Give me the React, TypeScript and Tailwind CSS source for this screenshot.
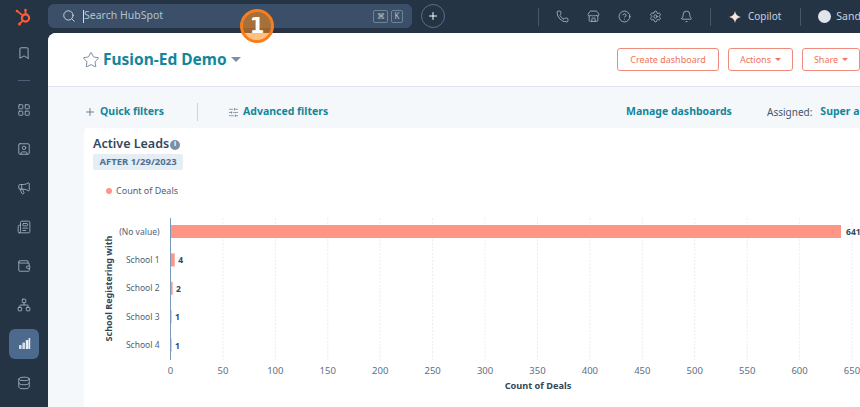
import {
  Bell,
  Bookmark,
  CircleHelp,
  Database,
  LayoutGrid,
  Megaphone,
  Network,
  Newspaper,
  Phone,
  Plus,
  Search,
  Settings,
  SlidersHorizontal,
  SquareUser,
  Star,
  Store,
  Wallet,
} from "lucide-react";

const font = { fontFamily: '"Noto Sans", sans-serif' };

const navIcons = [LayoutGrid, SquareUser, Megaphone, Newspaper, Wallet, Network];
const ticks = [0, 50, 100, 150, 200, 250, 300, 350, 400, 450, 500, 550, 600, 650];
const rows = [
  { label: "(No value)", value: 641 },
  { label: "School 1", value: 4 },
  { label: "School 2", value: 2 },
  { label: "School 3", value: 1 },
  { label: "School 4", value: 1 },
];

const xFor = (v: number) => 170.5 + v * 1.0485;

const HubLogo = () => (
  <svg width="20" height="20" viewBox="0 0 20 20" fill="none" stroke="#ff5c35">
    <circle cx="11.5" cy="11" r="3.6" strokeWidth="2.2" />
    <path d="M11.5 7.4V3.5M9 8.6 3.5 4.4M8.8 13.6 6 16.4" strokeWidth="1.8" strokeLinecap="round" />
    <circle cx="3" cy="4" r="1.3" fill="#ff5c35" stroke="none" />
    <circle cx="11.5" cy="3" r="1.3" fill="#ff5c35" stroke="none" />
    <circle cx="5.5" cy="17" r="1.5" fill="#ff5c35" stroke="none" />
  </svg>
);

const Sparkle = () => (
  <svg width="12" height="12" viewBox="0 0 12 12" fill="#f5e6e0">
    <path d="M6 0c.5 3.4 2.2 5.3 6 6-3.8.7-5.5 2.6-6 6-.5-3.4-2.2-5.3-6-6 3.8-.7 5.500-2.600 6-6Z" />
  </svg>
);

const ReportsIcon = () => (
  <svg width="13" height="13" viewBox="0 0 13 13" fill="#d5dfe9">
    <rect x="1" y="8" width="2.6" height="4" rx="0.6" />
    <rect x="4.400" y="5.500" width="2.6" height="6.500" rx="0.6" />
    <rect x="7.800" y="3" width="2.6" height="9" rx="0.6" fill="#e8eef4" />
    <rect x="10.600" y="1" width="1.600" height="11" rx="0.5" fill="#e8eef4" />
  </svg>
);

const Caret = ({ className }: { className: string }) => (
  <span className={`inline-block flex-none border-x-transparent ${className}`} />
);

const Sidebar = () => (
  <aside className="w-[48px] flex-none flex flex-col items-center text-[#a9b9c9]">
    <div className="h-[33px] flex items-center justify-center">
      <HubLogo />
    </div>
    <div className="h-[39px] flex items-center justify-center">
      <Bookmark size={14} strokeWidth={1.5} />
    </div>
    <div className="w-[12px] h-px bg-[#4d6178] mt-[8px] mb-[9px]" />
    {navIcons.map((Icon, i) => (
      <div key={i} className="h-[39px] flex items-center justify-center">
        <Icon size={14} strokeWidth={1.4} />
      </div>
    ))}
    <div className="h-[39px] flex items-center justify-center">
      <div className="w-[30px] h-[30px] rounded-md bg-[#4c6a8c] flex items-center justify-center">
        <ReportsIcon />
      </div>
    </div>
    <div className="h-[39px] flex items-center justify-center">
      <Database size={14} strokeWidth={1.4} />
    </div>
  </aside>
);

const TopBar = () => (
  <header className="relative h-[33px] flex-none flex items-center text-[#cfd9e3] whitespace-nowrap">
    <div className="w-[364px] flex-none h-[24px] -mt-px rounded-md bg-[#3b5068] flex items-center pl-[14px] pr-[9px]">
      <Search size={14} strokeWidth={1.6} className="flex-none" />
      <span className="w-px h-[13px] bg-[#d5dfe9] ml-[7px]" />
      <span className="text-[10.5px] text-[#b3c1cf]">Search HubSpot</span>
      <div className="ml-auto flex gap-[3px] text-[8px] text-[#b3c1cf]">
        <span className="w-[15px] h-[13px] border border-[#6f8398] rounded-[2px] flex items-center justify-center">⌘</span>
        <span className="w-[12px] h-[13px] border border-[#6f8398] rounded-[2px] flex items-center justify-center">K</span>
      </div>
    </div>
    <div className="ml-[9px] -mt-px flex-none w-[24px] h-[24px] rounded-full border border-[#5a6e84] flex items-center justify-center text-white">
      <Plus size={12} strokeWidth={2} />
    </div>
    <div className="ml-[93px] flex-none w-px h-[18px] bg-[#43576d]" />
    <div className="ml-[17px] flex-none flex items-center gap-[18px] text-[#b9c6d3]">
      <Phone size={13} strokeWidth={1.4} />
      <Store size={13} strokeWidth={1.4} />
      <CircleHelp size={13} strokeWidth={1.4} />
      <Settings size={13} strokeWidth={1.4} />
      <Bell size={13} strokeWidth={1.4} />
    </div>
    <div className="ml-[17px] flex-none w-px h-[18px] bg-[#43576d]" />
    <div className="ml-[18px] flex-none flex"><Sparkle /></div>
    <span className="ml-[7px] text-[10px] text-[#c6d2de]">Copilot</span>
    <div className="ml-[19px] flex-none w-px h-[18px] bg-[#43576d]" />
    <div className="ml-[17px] flex-none w-[13px] h-[13px] rounded-full bg-[#dfe5ea]" />
    <span className="ml-[5px] text-[10.5px] text-[#c6d2de]">Sandy</span>

    <div
      className="absolute left-[192px] top-[9px] w-[34px] h-[34px] rounded-full border-[3px] border-[#f97c1e] bg-[#ff8a14]/55 flex items-center justify-center text-white text-[21px] font-bold leading-none z-10"
      style={{ fontFamily: '"DejaVu Sans", sans-serif' }}
    >
      1
    </div>
  </header>
);

const PageHeader = () => (
  <div className="h-[54px] flex-none bg-white border-b border-[#dfe3eb] flex items-center pl-[34px] whitespace-nowrap">
    <Star size={18} strokeWidth={1.2} className="flex-none text-[#6a7f95]" />
    <h1 className="ml-[3px] text-[15.5px] font-bold text-[#13869b] leading-none">Fusion-Ed Demo</h1>
    <Caret className="ml-[4px] border-x-[5px] border-t-[5px] border-t-[#7c8fa3]" />
    <div className="ml-auto flex gap-[9px] text-[9px] text-[#f0735d]">
      <button className="w-[102px] h-[23px] rounded-[3px] border border-[#ef8a7c]">Create dashboard</button>
      <button className="w-[65px] h-[23px] rounded-[3px] border border-[#ef8a7c] flex items-center justify-center gap-[4px]">
        Actions <Caret className="border-x-[3px] border-t-[3px] border-t-[#f0735d]" />
      </button>
      <button className="w-[58px] h-[23px] rounded-[3px] border border-[#ef8a7c] flex items-center justify-center gap-[4px]">
        Share <Caret className="border-x-[3px] border-t-[3px] border-t-[#f0735d]" />
      </button>
    </div>
  </div>
);

const FilterRow = () => (
  <div className="h-[41px] flex-none flex items-center whitespace-nowrap text-[10.5px] font-bold text-[#13869b] pl-[36px] pt-[9px]">
    <Plus size={12} strokeWidth={2} className="flex-none text-[#6a7f95]" />
    <span className="ml-[4px] flex-none w-[64px]">Quick filters</span>
    <div className="ml-[33px] flex-none w-px h-[18px] bg-[#cbd6e2]" />
    <SlidersHorizontal size={11} strokeWidth={1.6} className="ml-[30px] flex-none text-[#6a7f95]" />
    <span className="ml-[4px] flex-none w-[86px]">Advanced filters</span>
    <span className="ml-[297px] flex-none w-[108px]">Manage dashboards</span>
    <span className="ml-[33px] flex-none text-[10px] font-normal text-[#42566b]">Assigned:</span>
    <span className="ml-[8px] flex-none">Super admin</span>
  </div>
);

const Chart = () => (
  <svg viewBox="84 206 776 201" className="block w-[776px] h-[201px] flex-none" style={font}>
    {ticks.map((t) => (
      <g key={t}>
        {t > 0 && (
          <line x1={xFor(t)} x2={xFor(t)} y1="218" y2="360" stroke="#e3e8ee" strokeWidth="0.8" strokeDasharray="2 1.500" />
        )}
        <text x={xFor(t)} y="374" fontSize="9.500" fill="#5c6f83" textAnchor="middle">{t}</text>
      </g>
    ))}
    {rows.map((r, i) => {
      const y = 231.5 + i * 28.4;
      return (
        <g key={r.label}>
          <text x="159.500" y={y + 3} fontSize="8.500" fill="#4f6277" textAnchor="end">{r.label}</text>
          <rect x="170.5" y={y - 6.5} width={r.value * 1.046} height="13" fill="#ff9685" />
          <text x={xFor(r.value) + 3.5} y={y + 3.500} fontSize="8.500" fontWeight="700" fill="#33475b">{r.value}</text>
        </g>
      );
    })}
    <line x1="170.5" x2="170.5" y1="218" y2="360" stroke="#7c98b6" strokeWidth="1" />
    <text x="538" y="389" fontSize="9.200" fontWeight="700" fill="#33475b" textAnchor="middle">Count of Deals</text>
    <text transform="translate(112 288.5) rotate(-90)" fontSize="9" fontWeight="700" fill="#33475b" textAnchor="middle">School Registering with</text>
  </svg>
);

const Card = () => (
  <section className="ml-[36px] flex-1 rounded-t bg-white flex flex-col overflow-hidden min-h-0">
    <div className="pl-[9px] pt-[8px]">
      <div className="flex items-center h-[17px]">
        <h2 className="text-[12.5px] font-semibold text-[#33475b] leading-none whitespace-nowrap">Active Leads</h2>
        <span className="ml-px w-[10px] h-[10px] rounded-full bg-[#7c8fa3] text-white text-[7px] font-bold flex items-center justify-center">i</span>
      </div>
      <div className="mt-px w-[90px] h-[16px] rounded-[2px] bg-[#e5eef4] text-[9.500px] font-bold text-[#516f90] flex items-center justify-center whitespace-nowrap">
        AFTER 1/29/2023
      </div>
      <div className="mt-[14px] ml-[13px] h-[13px] flex items-center gap-[4px] text-[9px] text-[#4f6277] whitespace-nowrap">
        <span className="w-[6px] h-[6px] rounded-full bg-[#ff9685]" />
        Count of Deals
      </div>
    </div>
    <div className="mt-[9px]">
      <Chart />
    </div>
  </section>
);

export default function App() {
  return (
    <div className="w-[860px] h-[407px] overflow-hidden flex bg-[#253445]" style={font}>
      <Sidebar />
      <div className="flex-1 min-w-0 flex flex-col">
        <TopBar />
        <main className="flex-1 min-h-0 rounded-tl-lg overflow-hidden bg-[#f5f8fa] flex flex-col">
          <PageHeader />
          <FilterRow />
          <Card />
        </main>
      </div>
    </div>
  );
}
